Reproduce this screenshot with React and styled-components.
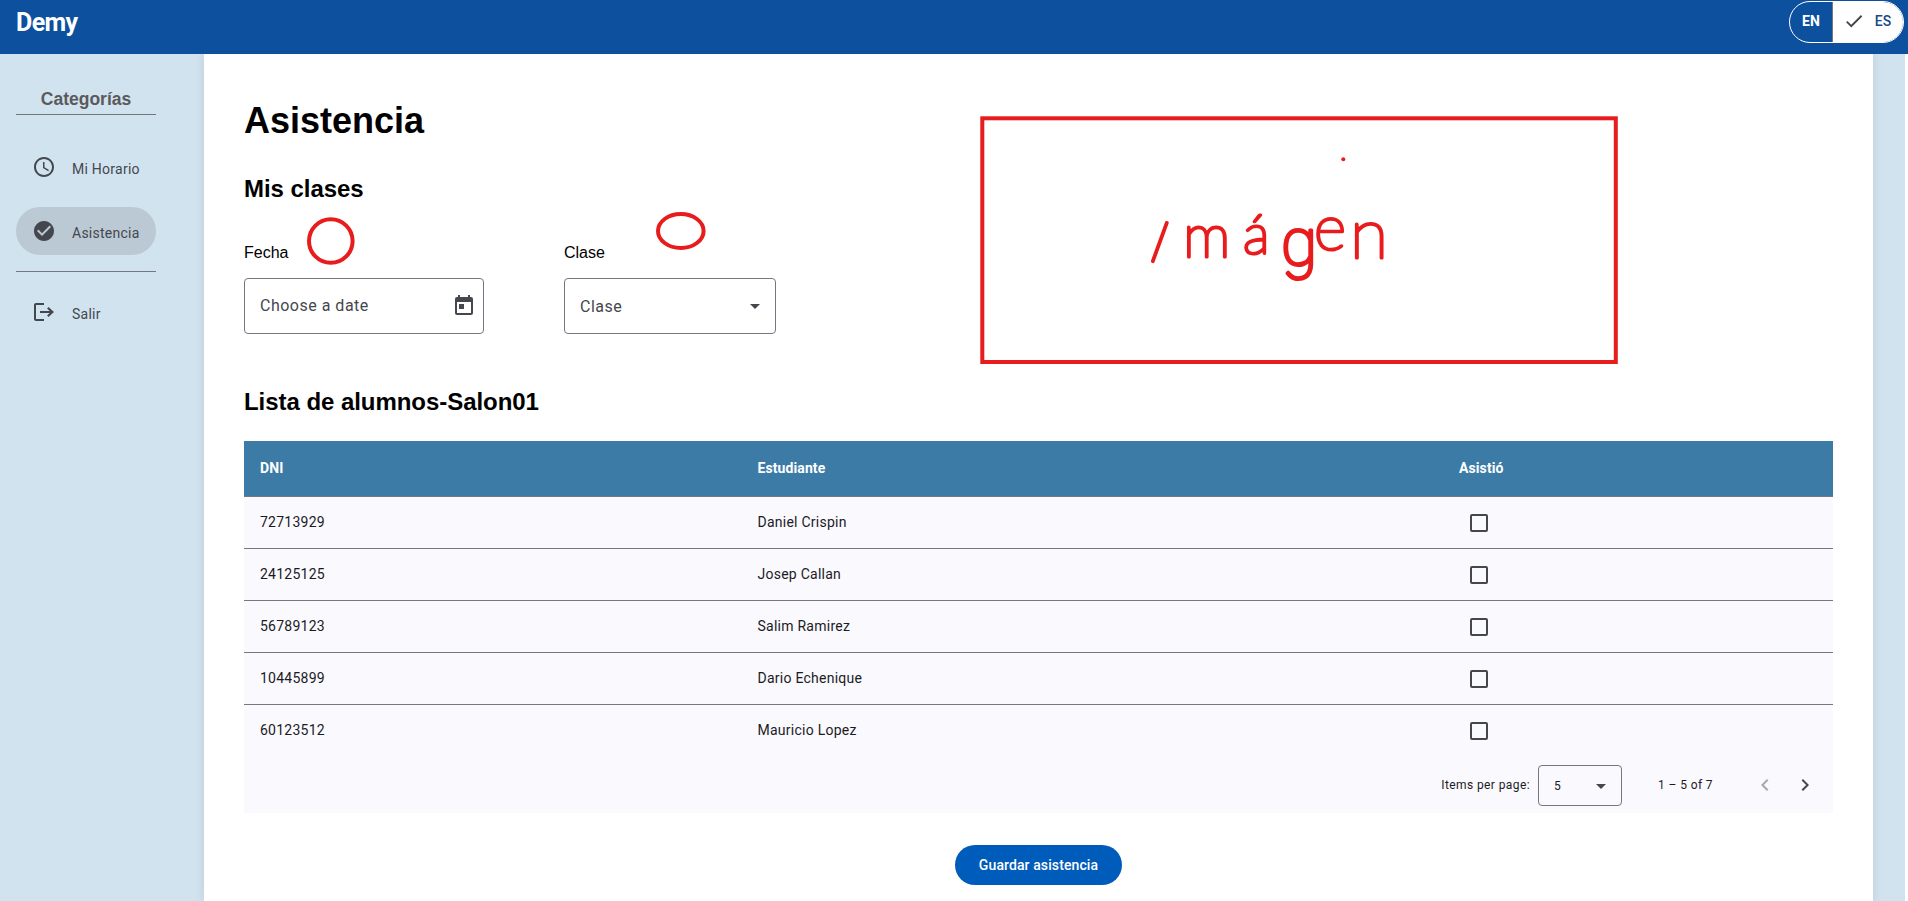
import React from "react";
import styled, { createGlobalStyle } from "styled-components";

const roboto = `Roboto, "Noto Sans", sans-serif`;
const arial = `"Liberation Sans", Arial, sans-serif`;
const outline = "#74777f";
const muted = "#44474e";

const GlobalStyle = createGlobalStyle`
  * { box-sizing: border-box; }
  body { margin: 0; background: #fff; overflow: hidden; font-family: ${arial}; }
  h1, h2, h3 { margin: 0; }
  button { font: inherit; border: 0; background: none; padding: 0; cursor: pointer; }
`;

const Page = styled.div`
  position: relative;
  display: flex;
  flex-direction: column;
  width: 100%;
  height: 901px;
  overflow: hidden;
`;

const TopBar = styled.header`
  display: flex;
  justify-content: space-between;
  align-items: flex-start;
  flex: none;
  height: 54px;
  padding: 1px 4px 0 16px;
  background: #0c509e;
  z-index: 1;
`;

const Brand = styled.div`
  font: 700 25px/28px ${roboto};
  letter-spacing: -0.6px;
  color: #fff;
  padding-top: 8px;
`;

const LanguageToggle = styled.div`
  display: flex;
  width: 115px;
  height: 42px;
  border: 1px solid #fff;
  border-radius: 21px;
  overflow: hidden;
`;

const LanguageOption = styled.button`
  display: flex;
  align-items: center;
  justify-content: center;
  gap: 10px;
  width: ${(p) => (p.$active ? "71px" : "42px")};
  padding-bottom: 2px;
  padding-right: ${(p) => (p.$active ? "2px" : "0")};
  flex: none;
  font: ${(p) => (p.$active ? 500 : 700)} 14px/20px ${roboto};
  color: ${(p) => (p.$active ? "#184a86" : "#fff")};
  background: ${(p) => (p.$active ? "#fff" : "transparent")};
  border-left: ${(p) => (p.$active ? `1px solid ${outline}` : "0")};
`;

const Body = styled.div`
  display: flex;
  flex: 1;
  min-height: 0;
  margin-right: 3px;
  padding-right: 32px;
  background: #d1e3ef;
`;

const Sidebar = styled.aside`
  display: flex;
  flex-direction: column;
  width: 204px;
  flex: none;
  padding: 35px 48px 0 16px;
`;

const SidebarTitle = styled.h3`
  font: 700 17.5px/21px ${arial};
  color: #5a5a5c;
  text-align: center;
  padding-bottom: 4px;
  border-bottom: 1px solid #74777a;
  margin-bottom: 28px;
`;

const NavItem = styled.a`
  display: flex;
  align-items: center;
  gap: 16px;
  height: 48px;
  padding-left: 16px;
  margin-bottom: 16px;
  border-radius: 24px;
  color: ${muted};
  background: ${(p) => (p.$active ? "#bac9d3" : "transparent")};
  font: 400 14px/20px ${roboto};
  letter-spacing: 0.25px;

  span { padding-top: 4px; }
`;

const NavDivider = styled.div`
  height: 1px;
  background: ${outline};
  margin-bottom: 16px;
`;

const Panel = styled.main`
  flex: 1;
  padding: 46px 40px 0;
  background: #fff;
  box-shadow: 0 0 10px rgba(0, 0, 0, 0.1);
`;

const PageTitle = styled.h1`
  font: 700 36px/41px ${arial};
  color: #000;
`;

const SectionTitle = styled.h2`
  font: 700 24px/28px ${arial};
  letter-spacing: -0.05px;
  color: #000;
  margin-top: ${(p) => p.$gap}px;
`;

const Filters = styled.div`
  display: flex;
  gap: 80px;
  margin-top: 41px;
`;

const Field = styled.label`
  display: flex;
  flex-direction: column;
  gap: 16px;
  width: ${(p) => p.$width}px;
  font: 400 16px/18px ${arial};
  color: #000;
`;

const FieldBox = styled.div`
  display: flex;
  align-items: center;
  justify-content: space-between;
  height: 56px;
  padding: 0 ${(p) => p.$end}px 0 15px;
  border: 1px solid ${outline};
  border-radius: 4px;
  font: 400 16px/24px ${roboto};
  letter-spacing: 0.5px;
  color: ${muted};
`;

const FieldText = styled.span`
  padding-top: ${(p) => (p.$low ? "2px" : "0")};
  padding-bottom: ${(p) => (p.$low ? "0" : "1px")};
`;

const Table = styled.section`
  margin-top: 25px;
  background: #faf9fe;
`;

const Row = styled.div`
  display: grid;
  grid-template-columns: 497.5px 701.5px 1fr;
  align-items: center;
  height: ${(p) => (p.$head ? 56 : 52)}px;
  border-bottom: 1px solid ${(p) => (p.$last ? "transparent" : outline)};
  background: ${(p) => (p.$head ? "#3b7ba6" : "transparent")};
  color: ${(p) => (p.$head ? "#fff" : "#1a1b1f")};
  font: ${(p) => (p.$head ? 700 : 400)} 14px/20px ${roboto};
  letter-spacing: ${(p) => (p.$head ? 0.1 : 0.25)}px;
`;

const Cell = styled.div`
  padding: 0 0 1px 16px;
`;

const Checkbox = styled.span`
  display: block;
  width: 18px;
  height: 18px;
  margin: 2px 0 0 11px;
  border: 2px solid ${muted};
  border-radius: 2px;
`;

const Paginator = styled.footer`
  display: flex;
  align-items: center;
  justify-content: flex-end;
  height: 56px;
  padding-right: 8px;
  color: #1a1b1f;
  font: 400 12px/16px ${roboto};
  letter-spacing: 0.4px;
`;

const PageSize = styled.div`
  display: flex;
  align-items: center;
  justify-content: space-between;
  width: 84px;
  height: 41px;
  margin: 1px 36px 0 8px;
  padding: 0 8px 0 15px;
  border: 1px solid ${outline};
  border-radius: 4px;
`;

const PageRange = styled.span`
  margin-right: 32px;
`;

const PageButton = styled.button`
  display: grid;
  place-items: center;
  width: 40px;
  height: 40px;
  color: ${muted};
  opacity: ${(p) => (p.disabled ? 0.45 : 1)};
`;

const Actions = styled.div`
  display: flex;
  justify-content: center;
  padding-top: 32px;
`;

const SaveButton = styled.button`
  width: 167px;
  height: 40px;
  border-radius: 20px;
  background: #005cbb;
  color: #fff;
  font: 500 14px/20px ${roboto};
  letter-spacing: 0.1px;
`;

const Markup = styled.svg`
  position: absolute;
  inset: 0;
  pointer-events: none;
  z-index: 2;
`;

const Note = styled.text`
  font-family: Lato, ${arial};
  font-weight: 100;
  fill: #e81c1c;
  stroke: #e81c1c;
  stroke-width: 3.1px;
  stroke-linejoin: round;
`;

const RoundLetter = styled.tspan`
  font-family: ${roboto};
`;

const paths = {
  clock:
    "M11.99 2C6.47 2 2 6.48 2 12s4.47 10 9.99 10C17.52 22 22 17.52 22 12S17.52 2 11.99 2zM12 20c-4.42 0-8-3.58-8-8s3.58-8 8-8 8 3.58 8 8-3.58 8-8 8zm.5-13H11v6l5.25 3.15.75-1.23-4.5-2.67z",
  checkCircle:
    "M12 2C6.48 2 2 6.48 2 12s4.48 10 10 10 10-4.48 10-10S17.52 2 12 2zm-2 15l-5-5 1.41-1.41L10 14.17l7.59-7.59L19 8l-9 9z",
  exit: "M4 3h8v2H4v14h8v2H4c-1.1 0-2-.9-2-2V5c0-1.1.9-2 2-2zM16.5 7l-1.4 1.4 2.6 2.6H8v2h9.7l-2.6 2.6 1.4 1.4 5.5-5z",
  calendar:
    "M19 3h-1V1h-2v2H8V1H6v2H5c-1.11 0-1.99.9-1.99 2L3 19c0 1.1.89 2 2 2h14c1.1 0 2-.9 2-2V5c0-1.1-.9-2-2-2zm0 16H5V8h14v11zM7 10h5v5H7z",
  down: "M7 10l5 5 5-5z",
  check: "M9 16.17L4.83 12l-1.42 1.41L9 19 21 7l-1.41-1.41z",
  left: "M15.41 7.41L14 6l-6 6 6 6 1.41-1.41L10.83 12z",
  right: "M10 6L8.59 7.41 13.17 12l-4.58 4.59L10 18l6-6z",
};

function Icon({ name, size = 24, color = "currentColor" }) {
  return (
    <svg width={size} height={size} viewBox="0 0 24 24" fill={color} aria-hidden="true">
      <path d={paths[name]} />
    </svg>
  );
}

const students = [
  ["72713929", "Daniel Crispin"],
  ["24125125", "Josep Callan"],
  ["56789123", "Salim Ramirez"],
  ["10445899", "Dario Echenique"],
  ["60123512", "Mauricio Lopez"],
];

function Annotations() {
  return (
    <Markup width="1908" height="901" fill="none" stroke="#e81c1c" strokeWidth="4">
      <circle cx="330.8" cy="241" r="21.8" />
      <ellipse cx="680.8" cy="231" rx="22.8" ry="17" />
      <rect x="982.3" y="118.3" width="633.5" height="243.7" />
      <circle cx="1343.3" cy="159.3" r="2" fill="#e81c1c" stroke="none" />
      <Note>
        <tspan x="1146" y="259" fontSize="59" rotate="20">I</tspan>
        <tspan x="1183" y="257" fontSize="60" rotate="0">m</tspan>
        <tspan x="1243" y="254" fontSize="56">á</tspan>
        <RoundLetter x="1281" y="265" fontSize="66">g</RoundLetter>
        <tspan x="1314" y="250" fontSize="62">e</tspan>
        <tspan x="1350" y="258" fontSize="70">n</tspan>
      </Note>
    </Markup>
  );
}

export default function App() {
  return (
    <>
      <GlobalStyle />
      <Page>
        <TopBar>
          <Brand>Demy</Brand>
          <LanguageToggle>
            <LanguageOption>EN</LanguageOption>
            <LanguageOption $active>
              <Icon name="check" size={22} color={muted} />
              ES
            </LanguageOption>
          </LanguageToggle>
        </TopBar>
        <Body>
          <Sidebar>
            <SidebarTitle>Categorías</SidebarTitle>
            <NavItem><Icon name="clock" /><span>Mi Horario</span></NavItem>
            <NavItem $active><Icon name="checkCircle" /><span>Asistencia</span></NavItem>
            <NavDivider />
            <NavItem><Icon name="exit" /><span>Salir</span></NavItem>
          </Sidebar>
          <Panel>
            <PageTitle>Asistencia</PageTitle>
            <SectionTitle $gap={34}>Mis clases</SectionTitle>
            <Filters>
              <Field $width={240}>
                Fecha
                <FieldBox $end={7}>
                  <FieldText>Choose a date</FieldText>
                  <Icon name="calendar" />
                </FieldBox>
              </Field>
              <Field $width={212}>
                Clase
                <FieldBox $end={8}>
                  <FieldText $low>Clase</FieldText>
                  <Icon name="down" />
                </FieldBox>
              </Field>
            </Filters>
            <SectionTitle $gap={54}>Lista de alumnos-Salon01</SectionTitle>
            <Table>
              <Row $head>
                <Cell>DNI</Cell>
                <Cell>Estudiante</Cell>
                <Cell>Asistió</Cell>
              </Row>
              {students.map(([dni, name], i) => (
                <Row key={dni} $last={i === students.length - 1}>
                  <Cell>{dni}</Cell>
                  <Cell>{name}</Cell>
                  <Cell><Checkbox role="checkbox" aria-checked="false" /></Cell>
                </Row>
              ))}
              <Paginator>
                <span>Items per page:</span>
                <PageSize>
                  5
                  <Icon name="down" color={muted} />
                </PageSize>
                <PageRange>1 – 5 of 7</PageRange>
                <PageButton disabled><Icon name="left" /></PageButton>
                <PageButton><Icon name="right" /></PageButton>
              </Paginator>
            </Table>
            <Actions>
              <SaveButton>Guardar asistencia</SaveButton>
            </Actions>
          </Panel>
        </Body>
        <Annotations />
      </Page>
    </>
  );
}
